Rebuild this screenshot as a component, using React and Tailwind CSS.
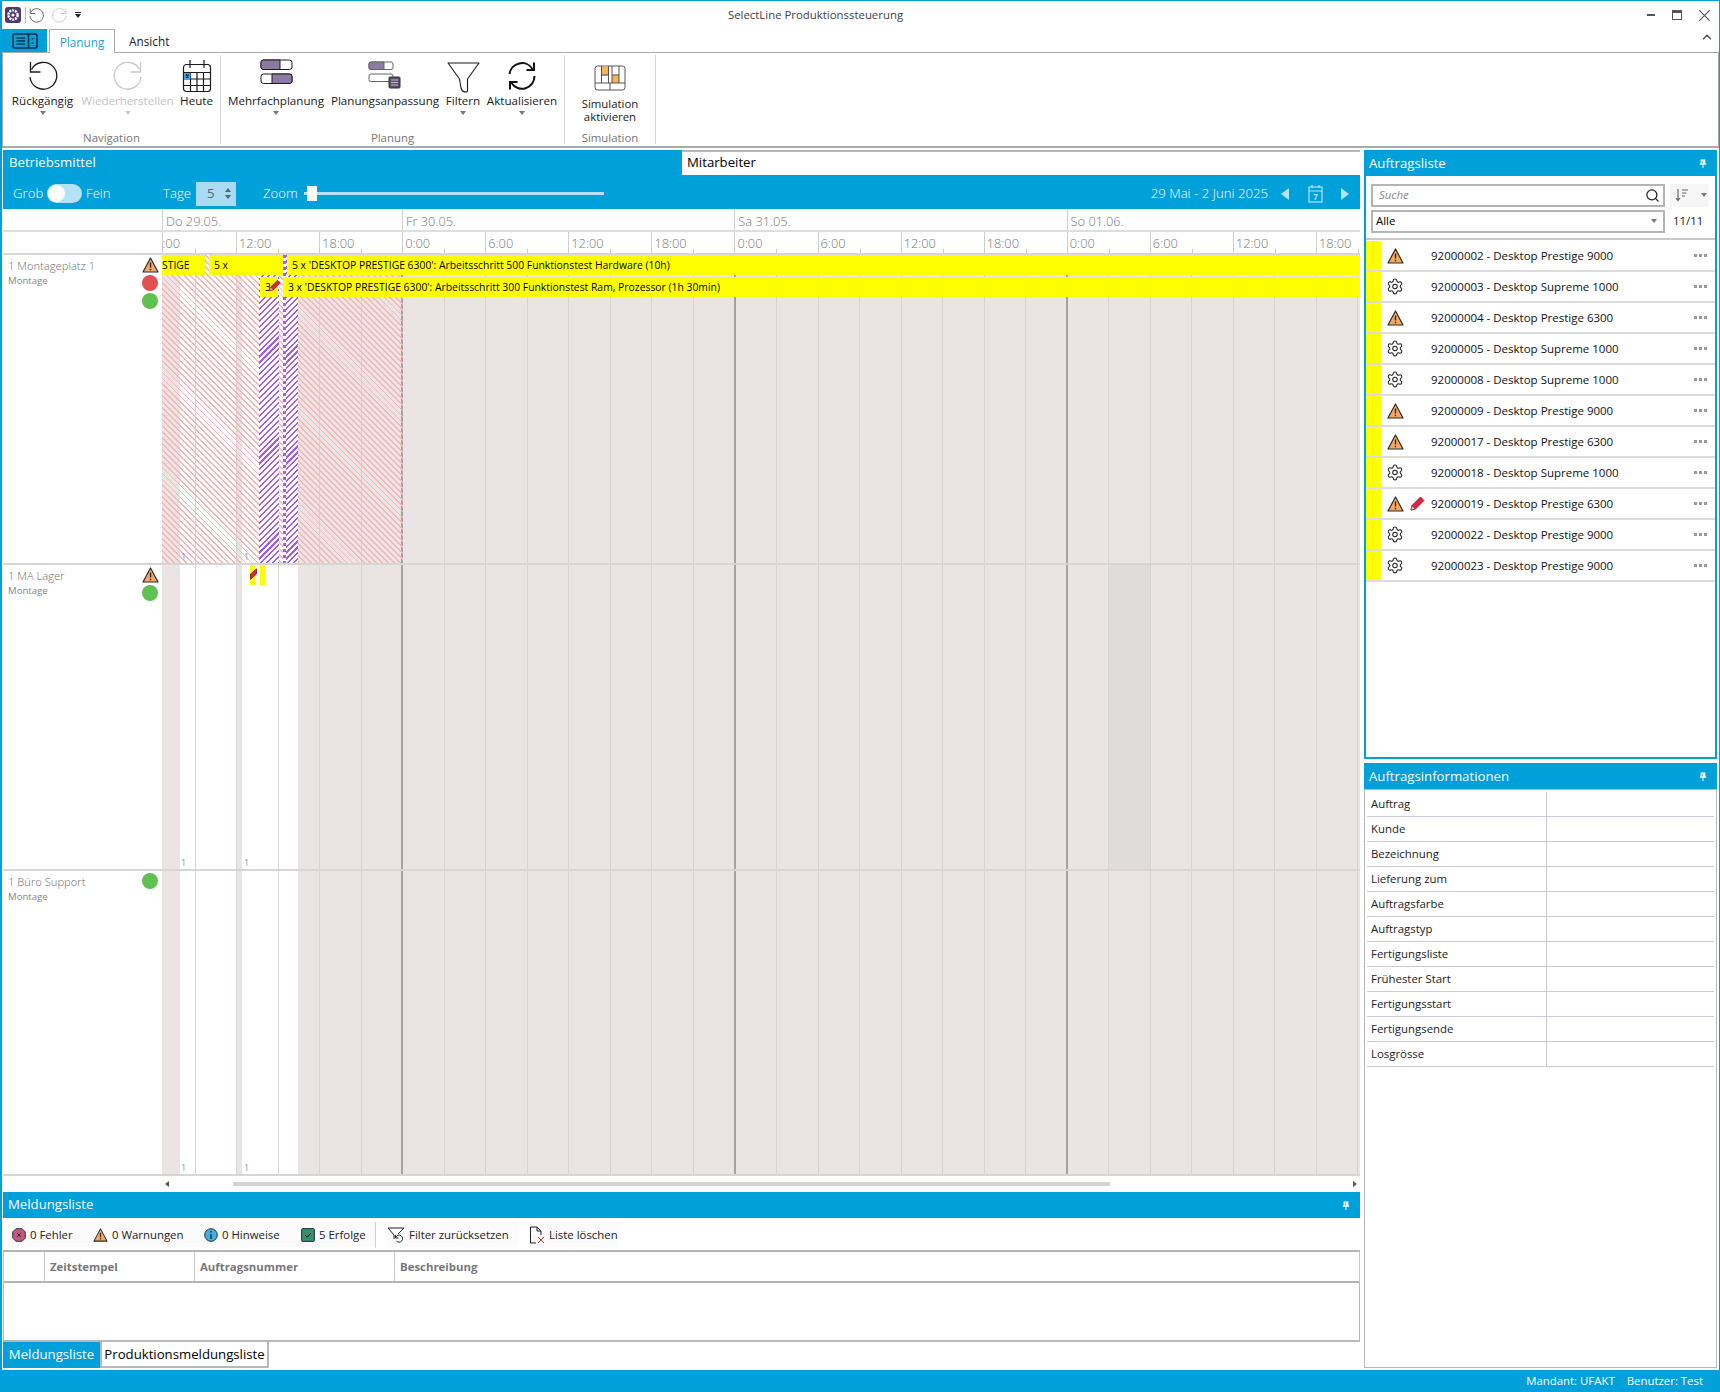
import { Settings, Search, ChevronUp } from "lucide-react";

const hourLabels = ["12:00", "18:00", "0:00", "6:00", "12:00", "18:00", "0:00", "6:00", "12:00", "18:00", "0:00", "6:00", "12:00", "18:00"];

const orders = [
  ["92000002 - Desktop Prestige 9000", "warn"],
  ["92000003 - Desktop Supreme 1000", "gear"],
  ["92000004 - Desktop Prestige 6300", "warn"],
  ["92000005 - Desktop Supreme 1000", "gear"],
  ["92000008 - Desktop Supreme 1000", "gear"],
  ["92000009 - Desktop Prestige 9000", "warn"],
  ["92000017 - Desktop Prestige 6300", "warn"],
  ["92000018 - Desktop Supreme 1000", "gear"],
  ["92000019 - Desktop Prestige 6300", "warn", true],
  ["92000022 - Desktop Prestige 9000", "gear"],
  ["92000023 - Desktop Prestige 9000", "gear"],
];

const infoFields = ["Auftrag", "Kunde", "Bezeichnung", "Lieferung zum", "Auftragsfarbe", "Auftragstyp", "Fertigungsliste", "Frühester Start", "Fertigungsstart", "Fertigungsende", "Losgrösse"];

const Caret = ({ className = "border-t-[#777]" }) => (
  <span className={`block w-0 h-0 border-x-[3px] border-x-transparent border-t-[4px] ${className}`} />
);

const Warn = ({ className = "w-[17px] h-[16px]" }) => (
  <svg viewBox="0 0 17 16" className={className}>
    <path d="M8.5 1 L16 15 H1 Z" fill="#f7a860" stroke="#2b2b2b" strokeWidth="1.2" strokeLinejoin="round" />
    <path d="M8.5 5.5 V10.5 M8.5 11.8 V13.2" stroke="#2b2b2b" strokeWidth="1.4" />
  </svg>
);

const Pencil = ({ className = "w-[15px] h-[15px]" }) => (
  <svg viewBox="0 0 15 15" className={className}>
    <path d="M10.5 1 L14 4.5 L5.5 13 L1 14 L2 9.5 Z" fill="#d9283c" stroke="#8c1020" strokeWidth="0.8" strokeLinejoin="round" />
    <path d="M2 9.5 L5.5 13 L1 14 Z" fill="#f3c9b8" stroke="#8c1020" strokeWidth="0.6" />
  </svg>
);

const Pin = () => (
  <svg viewBox="0 0 10 12" className="w-[8px] h-[11px]">
    <path d="M2 1 H8 V6 H9 V7.5 H5.6 V11.5 H4.4 V7.5 H1 V6 H2 Z M3.5 2.2 V6 H4.5 V2.2 Z" fill="#fff" fillRule="evenodd" />
  </svg>
);

const UndoIcon = ({ color = "#1c1c1c", flip = false, className = "w-[30px] h-[30px]", weight = "1.3" }) => (
  <svg viewBox="0 0 30 30" className={`shrink-0 ${className} ${flip ? "-scale-x-100" : ""}`} fill="none" stroke={color} strokeWidth={weight}>
    <path d="M3.5 8.5 A13.4 13.4 0 1 1 2 16" />
    <path d="M2.5 1 V11 H12.5" />
  </svg>
);

const CalendarIcon = () => (
  <svg viewBox="0 0 30 34" className="w-[30px] h-[34px]" fill="none" stroke="#1c1c1c" strokeWidth="1.2">
    <rect x="1.5" y="5.5" width="27" height="27" rx="3" fill="#fff" />
    <path d="M1.5 13.5 H28.5 M1.5 20 H28.5 M1.5 26.5 H28.5 M8.5 13.5 V32.5 M15 13.5 V32.5 M21.5 13.5 V32.5 M8 1 V9 M22 1 V9" />
    <rect x="2" y="14" width="6.5" height="6" fill="#3fa5da" stroke="none" />
    <path d="M4 15.5 L6.5 18.5 M6.5 15.5 L4 18.5" stroke="#123" />
  </svg>
);

const MultiPlanIcon = () => (
  <svg viewBox="0 0 33 26" className="w-[33px] h-[26px]" stroke="#1c1c1c" strokeWidth="1">
    <rect x="1" y="1" width="31" height="9.5" rx="2.5" fill="#fff" />
    <path d="M3.5 1 H20 V10.5 H3.5 A2.5 2.5 0 0 1 1 8 V3.5 A2.5 2.5 0 0 1 3.5 1 Z" fill="#8d7aa3" />
    <rect x="1" y="15" width="31" height="9.5" rx="2.5" fill="#fff" />
    <path d="M12 15 H29.5 A2.5 2.5 0 0 1 32 17.5 V22 A2.5 2.5 0 0 1 29.5 24.5 H12 Z" fill="#8d7aa3" />
  </svg>
);

const AdjustIcon = () => (
  <svg viewBox="0 0 34 28" className="w-[34px] h-[28px]" stroke="#666" strokeWidth="1">
    <rect x="1" y="1" width="24" height="7.5" rx="2" fill="#fff" />
    <path d="M3 1 H16 V8.5 H3 A2 2 0 0 1 1 6.5 V3 A2 2 0 0 1 3 1 Z" fill="#8d7aa3" />
    <rect x="1" y="13" width="24" height="7.5" rx="2" fill="#fff" />
    <rect x="21" y="16" width="11" height="11" rx="1" fill="#5d4c6e" stroke="#333" />
    <path d="M23 19 H30 M23 21.5 H30 M23 24 H30" stroke="#ddd" strokeWidth="0.8" />
  </svg>
);

const FilterIcon = ({ className = "w-[33px] h-[31px]" }) => (
  <svg viewBox="0 0 33 31" className={className} fill="#fff" stroke="#1c1c1c" strokeWidth="1.1" strokeLinejoin="round">
    <path d="M1 1 H32 L20.5 17 V29 Q20.5 30 19 30 Q15 30 14 26 L12.5 17 Z" />
  </svg>
);

const RefreshIcon = () => (
  <svg viewBox="0 0 30 30" className="w-[30px] h-[30px]" fill="none" stroke="#111" strokeWidth="2">
    <path d="M2.5 13 A12.5 12.5 0 0 1 25.5 8" />
    <path d="M27.5 15 A12.5 12.5 0 0 1 4.5 22" />
    <path d="M27 1.5 V9 H19.5 M3 28.5 V21 H10.5" />
  </svg>
);

const SimIcon = () => (
  <svg viewBox="0 0 32 26" className="w-[32px] h-[26px]" stroke="#444" strokeWidth="0.9" fill="#fff">
    <rect x="1" y="1" width="30" height="24" rx="2.5" />
    <rect x="7.5" y="1.5" width="7" height="9" fill="#f6b25f" stroke="none" />
    <rect x="18" y="10" width="7" height="8" fill="#f6b25f" stroke="none" />
    <path d="M7.5 1 V18 M14.5 1 V18 M18 1 V18 M25 1 V18 M1 18 H31 M16 18 V25 M7.5 10 H14.5 M18 10 H25" fill="none" />
  </svg>
);

const AppLogo = () => (
  <svg viewBox="0 0 16 16" className="w-[16px] h-[16px]">
    <rect width="16" height="16" rx="3" fill="#4e3a6d" />
    <circle cx="8" cy="8" r="4.6" fill="none" stroke="#fff" strokeWidth="2.4" strokeDasharray="2 0.9" />
    <circle cx="8" cy="8" r="1.6" fill="#fff" />
  </svg>
);

const RibbonButton = ({ label, icon, width, caret, disabled, lift = "pb-0" }) => (
  <div className={`flex flex-col items-center shrink-0 ${width}`}>
    <div className={`h-[37px] mt-[1px] flex items-end justify-center ${lift}`}>{icon}</div>
    <span className={`text-[11.6px] leading-[16px] whitespace-nowrap ${disabled ? "text-[#c4c4c4]" : "text-[#1a1a1a]"}`}>{label}</span>
    {caret && <span className="mt-[2px]"><Caret className={disabled ? "border-t-[#ccc]" : "border-t-[#777]"} /></span>}
  </div>
);

const RibbonGroup = ({ label, width, children }) => (
  <div className={`flex flex-col shrink-0 border-r border-[#d4d4d4] my-[2px] ${width}`}>
    <div className="flex flex-1">{children}</div>
    <div className="h-[11px] text-center text-[11.4px] leading-[10px] text-[#777]">{label}</div>
  </div>
);

const Ribbon = () => (
  <div className="h-[95px] flex border-b-2 border-x border-[#ababab] bg-white shrink-0">
    <RibbonGroup label="Navigation" width="w-[218px]">
      <div className="w-[4px]" />
      <RibbonButton label="Rückgängig" icon={<UndoIcon />} lift="pb-[2px]" width="w-[71px]" caret />
      <RibbonButton label="Wiederherstellen" icon={<UndoIcon color="#c8c8c8" flip />} lift="pb-[2px]" width="w-[99px]" caret disabled />
      <RibbonButton label="Heute" icon={<CalendarIcon />} width="w-[39px]" />
    </RibbonGroup>
    <RibbonGroup label="Planung" width="w-[344px]">
      <div className="w-[4px]" />
      <RibbonButton label="Mehrfachplanung" icon={<MultiPlanIcon />} lift="pb-[8px]" width="w-[102px]" caret />
      <RibbonButton label="Planungsanpassung" icon={<AdjustIcon />} lift="pb-[4px]" width="w-[116px]" />
      <RibbonButton label="Filtern" icon={<FilterIcon />} width="w-[40px]" caret />
      <RibbonButton label="Aktualisieren" icon={<RefreshIcon />} lift="pb-[2px]" width="w-[78px]" caret />
    </RibbonGroup>
    <RibbonGroup label="Simulation" width="w-[91px]">
      <div className="flex flex-col items-center w-full">
        <div className="h-[36px] flex items-end"><SimIcon /></div>
        <span className="mt-[6px] text-[11.4px] leading-[13px] text-center text-[#1a1a1a]">Simulation<br />aktivieren</span>
      </div>
    </RibbonGroup>
  </div>
);

// Arbeitszeit-Bänder und Rasterlinien einer Zeile
const RowGrid = ({ sunday }) => (
  <>
    <div className="absolute inset-0 flex">
      <div className="w-[18px] bg-[#eae4e4]" />
      <div className="w-[56px] bg-white" />
      <div className="w-[6px] bg-[#eae4e4]" />
      <div className="w-[56px] bg-white" />
      <div className="flex-1 bg-[#eae4e4]" />
    </div>
    {sunday && <div className="absolute inset-y-0 left-[946px] w-[42px] bg-[#e0dcdc]" />}
    <GridLines />
  </>
);

const GridLines = () => {
  const cells = [];
  for (let i = 0; i < 29; i++) cells.push(i);
  return (
    <div className="absolute inset-0 flex overflow-hidden z-10">
      {cells.map((i) => (
        <div
          key={i}
          style={{ width: i === 0 ? 33.6 : 41.54 }}
          className={`shrink-0 box-border ${(i + 1) % 8 === 6 ? "border-r-2 border-[#a3a3a3]" : "border-r border-[#d6d4d4]"}`}
        />
      ))}
    </div>
  );
};

const RowOne = () => (
  <div className="h-[310px] flex border-b-2 border-[#d6d6d6] shrink-0">
    <ResourceLabel name="1 Montageplatz 1" warn red />
    <div className="relative flex-1 overflow-hidden">
      <RowGrid />
      <div className="absolute inset-y-0 left-0 w-[241px] z-20 bg-[repeating-linear-gradient(45deg,#f7b7b7_0px,#f7b7b7_1.3px,transparent_1.3px,transparent_4.2px)]" />
      <div className="absolute inset-y-0 left-[97px] w-[20px] z-20 bg-white" />
      <div className="absolute inset-y-0 left-[97px] w-[20px] z-20 bg-[repeating-linear-gradient(135deg,#a45df0_0px,#a45df0_1.5px,transparent_1.5px,transparent_4.2px)]" />
      <div className="absolute inset-y-0 left-[121px] w-[3px] z-20 bg-[repeating-linear-gradient(180deg,#a45df0_0px,#a45df0_3px,#fff_3px,#fff_6px)]" />
      <div className="absolute inset-y-0 left-[124px] w-[12px] z-20 bg-white" />
      <div className="absolute inset-y-0 left-[124px] w-[12px] z-20 bg-[repeating-linear-gradient(135deg,#a45df0_0px,#a45df0_1.5px,transparent_1.5px,transparent_4.2px)]" />
      <Bar className="left-0 w-[43px] top-0">STIGE</Bar>
      <Bar className="left-[47px] w-[74px] top-0 pl-[5px]">5 x</Bar>
      <Bar className="left-[125px] right-0 top-0 pl-[5px]">5 x 'DESKTOP PRESTIGE 6300': Arbeitsschritt 500 Funktionstest Hardware (10h)</Bar>
      <Bar className="left-[98px] w-[18px] top-[22px] pl-[5px]">3</Bar>
      <span className="absolute left-[107px] top-[24px] z-40"><Pencil className="w-[12px] h-[13px]" /></span>
      <Bar className="left-[121px] right-0 top-[22px] pl-[5px]">3 x 'DESKTOP PRESTIGE 6300': Arbeitsschritt 300 Funktionstest Ram, Prozessor (1h 30min)</Bar>
      <RowMarks />
    </div>
  </div>
);

const RowMarks = () => (
  <>
    <span className="absolute left-[19px] bottom-[1px] z-30 text-[9px] leading-[10px] text-[#7d9ab0]">1</span>
    <span className="absolute left-[82px] bottom-[1px] z-30 text-[9px] leading-[10px] text-[#7d9ab0]">1</span>
  </>
);

const Bar = ({ className, children }) => (
  <div className={`absolute h-[20px] z-30 bg-[#ffff00] text-[10.36px] leading-[20px] text-black whitespace-nowrap overflow-hidden ${className}`}>{children}</div>
);

const ResourceLabel = ({ name, warn, red }) => (
  <div className="w-[159px] flex justify-between shrink-0 pl-[5px] pr-[4px] pt-[2px] bg-white">
    <div>
      <div className="text-[11.2px] leading-[17px] font-light text-[#6e6e6e] whitespace-nowrap">{name}</div>
      <div className="text-[9.6px] leading-[14px] text-[#858585]">Montage</div>
    </div>
    <div className="flex flex-col items-center w-[16px] gap-[2px]">
      {warn && <Warn />}
      {red && <span className="w-[16px] h-[16px] rounded-full bg-[#e05050]" />}
      <span className="w-[16px] h-[16px] rounded-full bg-[#60c050]" />
    </div>
  </div>
);

const Timeline = () => (
  <div className="flex flex-col">
    <div className="flex pl-[159px] h-[23px] border-b-2 border-[#dedede] overflow-hidden">
      {[["Do 29.05.", "w-[240px]"], ["Fr 30.05.", "w-[332.3px]"], ["Sa 31.05.", "w-[332.3px]"], ["So 01.06.", "w-[293px]"]].map(([d, w]) => (
        <div key={d} className={`${w} shrink-0 border-l border-[#d0d0d0] pl-[3px] text-[12.8px] leading-[24px] font-light text-[#777]`}>{d}</div>
      ))}
    </div>
    <div className="flex pl-[159px] h-[23px] border-b-2 border-[#d6d6d6] overflow-hidden">
      <div className="relative w-[74px] shrink-0 border-l border-[#d0d0d0] overflow-hidden text-[12.8px] leading-[22px] font-light text-[#777]">
        <span className="absolute left-[-8px]">6:00</span>
        <span className="absolute left-[32px] bottom-0 h-[4px] border-l border-[#cfcfcf]" />
      </div>
      {hourLabels.map((h, i) => (
        <div key={i} className="relative w-[83.08px] shrink-0 border-l border-[#d0d0d0] pl-[2px] text-[12.8px] leading-[22px] font-light text-[#777]">
          {h}
          <span className="absolute left-[41px] bottom-0 h-[4px] border-l border-[#cfcfcf]" />
        </div>
      ))}
    </div>
  </div>
);

const GanttArea = () => (
  <div className="flex flex-col">
    <Timeline />
    <RowOne />
    <div className="h-[306px] flex border-b-2 border-[#d6d6d6]">
      <ResourceLabel name="1 MA Lager" warn />
      <div className="relative flex-1 overflow-hidden">
        <RowGrid sunday />
        <div className="absolute left-[88px] w-[5px] top-0 h-[20px] z-30 bg-[#ffff00]" />
        <div className="absolute left-[98px] w-[5px] top-0 h-[20px] z-30 bg-[#ffff00]" />
        <svg viewBox="0 0 7 12" className="absolute left-[88px] top-[3px] z-40 w-[7px] h-[12px]">
          <path d="M.5 6 L6.5 .8 V6 L.5 11.2 Z" fill="#d9283c" stroke="#6d0c18" strokeWidth="0.7" />
        </svg>
        <RowMarks />
      </div>
    </div>
    <div className="h-[305px] flex border-b-2 border-[#d6d6d6]">
      <ResourceLabel name="1 Büro Support" />
      <div className="relative flex-1 overflow-hidden">
        <RowGrid />
        <RowMarks />
      </div>
    </div>
    <div className="h-[16px] flex items-center bg-white relative">
      <div className="w-[159px]" />
      <span className="w-0 h-0 ml-[3px] border-y-[3.5px] border-y-transparent border-r-[4px] border-r-[#555]" />
      <div className="ml-[64px] w-[877px] h-[4px] bg-[#d3d3d3]" />
      <span className="ml-auto mr-[3px] w-0 h-0 border-y-[3.5px] border-y-transparent border-l-[4px] border-l-[#555]" />
    </div>
  </div>
);

const LeftPane = () => (
  <div className="w-[1357px] flex flex-col shrink-0">
    <div className="flex h-[25px] mt-[2px] shrink-0">
      <div className="w-[679px] bg-[#00a0da] text-white text-[13.2px] leading-[25px] pl-[6px] font-medium">Betriebsmittel</div>
      <div className="flex-1 border-t-2 border-[#b8b8b8] bg-white text-black text-[13.2px] leading-[21px] pl-[5px]">Mitarbeiter</div>
    </div>
    <div className="h-[34px] pt-[3px] bg-[#00a0da] flex items-center shrink-0 text-white text-[13.2px] font-light">
      <span className="ml-[10px] w-[34px]">Grob</span>
      <span className="w-[35px] h-[19px] rounded-full bg-[#b5e3f6] flex items-center">
        <span className="w-[17px] h-[17px] rounded-full bg-white ml-[1px]" />
      </span>
      <span className="ml-[4px] w-[77px]">Fein</span>
      <span className="w-[33px]">Tage</span>
      <span className="w-[40px] h-[24px] bg-[#a9dcf3] flex items-center justify-between pl-[11px] pr-[5px] text-[#55666f] font-normal">
        5
        <span className="flex flex-col gap-[3px]">
          <span className="w-0 h-0 border-x-[3px] border-x-transparent border-b-[4px] border-b-[#55666f]" />
          <Caret className="border-t-[#55666f]" />
        </span>
      </span>
      <span className="ml-[27px] w-[36px]">Zoom</span>
      <span className="relative ml-[5px] w-[300px] h-[3px] bg-[#b5e3f6]">
        <span className="absolute left-[3px] top-[-6px] w-[10px] h-[15px] bg-white" />
      </span>
      <span className="ml-auto mr-[13px] whitespace-nowrap">29 Mai - 2 Juni 2025</span>
      <span className="w-0 h-0 border-y-[6px] border-y-transparent border-r-[8px] border-r-[#b5e3f6]" />
      <svg viewBox="0 0 15 19" className="w-[15px] h-[19px] ml-[19px]" fill="none" stroke="#b5e3f6" strokeWidth="1.2">
        <rect x="1" y="3" width="13" height="15" />
        <path d="M1 7 H14 M4 1 V4 M11 1 V4" />
        <text x="7.5" y="16" textAnchor="middle" fontSize="8" fill="#b5e3f6" stroke="none" fontWeight="700">7</text>
      </svg>
      <span className="ml-[18px] mr-[11px] w-0 h-0 border-y-[6px] border-y-transparent border-l-[8px] border-l-[#b5e3f6]" />
    </div>
    <GanttArea />
    <div className="h-[26px] bg-[#00a0da] flex items-center justify-between pl-[5px] pr-[10px] text-white text-[13.2px] font-medium shrink-0">
      Meldungsliste
      <Pin />
    </div>
    <div className="h-[34px] pt-[1px] flex items-center text-[11.4px] text-[#222] border-b-2 border-[#b4b4b4] shrink-0 whitespace-nowrap">
      <ToolItem className="ml-[9px] w-[81px]" icon={<svg viewBox="0 0 14 14" className="w-[14px] h-[14px]"><path d="M4 .7 H10 L13.3 4 V10 L10 13.3 H4 L.7 10 V4 Z" fill="#c05a80" stroke="#333" /><path d="M5.3 5.3 L8.7 8.7 M8.7 5.3 L5.3 8.7" stroke="#222" /></svg>}>0 Fehler</ToolItem>
      <ToolItem className="w-[111px]" icon={<Warn className="w-[15px] h-[14px]" />}>0 Warnungen</ToolItem>
      <ToolItem className="w-[97px]" icon={<svg viewBox="0 0 14 14" className="w-[14px] h-[14px]"><circle cx="7" cy="7" r="6.3" fill="#45aee0" stroke="#234" /><path d="M7 6 V11 M7 3 V4.4" stroke="#123" strokeWidth="1.3" /></svg>}>0 Hinweise</ToolItem>
      <ToolItem className="w-[74px]" icon={<svg viewBox="0 0 14 14" className="w-[14px] h-[14px]"><rect x=".6" y=".6" width="12.8" height="12.8" rx="1" fill="#349068" stroke="#234" /><path d="M4 7 L6.2 9.2 L10 5" fill="none" stroke="#111" /></svg>}>5 Erfolge</ToolItem>
      <span className="w-px h-[26px] bg-[#d0d0d0]" />
      <ToolItem className="ml-[11px] w-[131px]" icon={<svg viewBox="0 0 18 16" className="w-[18px] h-[16px]" fill="none" stroke="#222"><path d="M1 1 H17 L11 7 M1 1 L7 8 V12" /><path d="M9 10 A3.5 3.5 0 1 1 9.5 14 M8.5 8 V11 H11.5" /></svg>}>Filter zurücksetzen</ToolItem>
      <ToolItem className="ml-[11px] w-[90px]" icon={<svg viewBox="0 0 16 18" className="w-[16px] h-[18px]" fill="none" stroke="#222"><path d="M7 17 H1.5 V1 H8 L12 5 V9 M8 1 V5 H12" /><path d="M9 11 L15 17 M15 11 L9 17" stroke="#c0304a" /></svg>}>Liste löschen</ToolItem>
    </div>
    <div className="h-[31px] flex text-[11.4px] font-bold text-[#777] border-b-2 border-[#b4b4b4] border-x border-x-[#c8c8c8] shrink-0">
      <div className="w-[41px] border-r border-[#c8c8c8]" />
      <div className="w-[150px] border-r border-[#c8c8c8] pl-[5px] leading-[30px]">Zeitstempel</div>
      <div className="w-[200px] border-r border-[#c8c8c8] pl-[5px] leading-[30px]">Auftragsnummer</div>
      <div className="flex-1 pl-[5px] leading-[30px]">Beschreibung</div>
    </div>
    <div className="h-[59px] border-x border-b-2 border-[#b8b8b8] shrink-0" />
    <div className="flex h-[26px] text-[13.2px] shrink-0">
      <div className="w-[97px] bg-[#00a0da] text-white text-center leading-[25px] font-medium">Meldungsliste</div>
      <div className="w-[169px] border-2 border-t-0 border-[#b8b8b8] text-black text-center leading-[24px]">Produktionsmeldungsliste</div>
    </div>
  </div>
);

const ToolItem = ({ icon, className, children }) => (
  <div className={`flex items-center gap-[4px] h-[25px] bg-[#fbfbfb] shrink-0 ${className}`}>
    {icon}
    <span>{children}</span>
  </div>
);

const OrderList = () => (
  <div className="h-[583px] border-x-2 border-b-2 border-[#00a0da] flex flex-col shrink-0">
    <div className="flex items-center h-[22px] mt-[8px] ml-[5px] gap-[5px]">
      <div className="w-[294px] h-[23px] border-2 border-[#b4b4b4] flex items-center justify-between pl-[6px] pr-[3px] text-[11.4px] italic text-[#8a8a8a]">
        Suche
        <Search size={15} strokeWidth={2} className="text-[#222]" />
      </div>
      <div className="w-[39px] h-[23px] bg-[#f6f6f6] flex items-center pl-[5px] gap-[12px]">
        <svg viewBox="0 0 14 14" className="w-[14px] h-[14px]" fill="none" stroke="#666" strokeWidth="1.2"><path d="M3 1 V12 M1 10 L3 12.5 L5 10 M7 2 H13 M7 5 H11.5 M7 8 H10" /></svg>
        <Caret />
      </div>
    </div>
    <div className="flex items-center h-[22px] mt-[4px] ml-[5px]">
      <div className="w-[294px] h-[23px] border-2 border-[#b4b4b4] flex items-center justify-between pl-[3px] pr-[6px] text-[11.4px] text-black">
        Alle
        <Caret />
      </div>
      <span className="ml-[8px] text-[11.4px] text-[#222]">11/11</span>
    </div>
    <div className="mt-[6px] border-t-2 border-[#c8c8c8] pt-[1px]">
      {orders.map(([name, kind, edited]) => (
        <div key={name} className="h-[31px] flex items-center border-b-2 border-[#dcdcdc]">
          <div className="w-[15px] h-full bg-[#ffff00]" />
          <div className="w-[18px] ml-[5px] flex justify-center">
            {kind === "warn" ? <Warn /> : <Settings size={19} strokeWidth={1.4} className="text-[#222]" />}
          </div>
          <div className="w-[27px] flex justify-center">{edited && <Pencil />}</div>
          <span className="text-[11.5px] text-[#111] whitespace-nowrap">{name}</span>
          <span className="ml-auto mr-[8px] flex gap-[2px]">
            <span className="w-[3px] h-[3px] bg-[#9a9a9a]" />
            <span className="w-[3px] h-[3px] bg-[#9a9a9a]" />
            <span className="w-[3px] h-[3px] bg-[#9a9a9a]" />
          </span>
        </div>
      ))}
    </div>
  </div>
);

const RightPane = () => (
  <div className="w-[353px] ml-[4px] flex flex-col shrink-0">
    <div className="h-[26px] pt-[1px] mt-[2px] bg-[#00a0da] flex items-center justify-between pl-[5px] pr-[10px] text-white text-[13.2px] font-medium shrink-0">
      Auftragsliste
      <Pin />
    </div>
    <OrderList />
    <div className="h-[26px] pt-[1px] mt-[4px] bg-[#00a0da] flex items-center justify-between pl-[5px] pr-[10px] text-white text-[13.2px] font-medium shrink-0">
      Auftragsinformationen
      <Pin />
    </div>
    <div className="flex-1 border-x border-b border-t border-[#b8b8b8] pl-[2px] pr-[2px] pt-[2px] mb-[2px]">
      {infoFields.map((f) => (
        <div key={f} className="h-[25px] flex border-b border-[#cbcbd6]">
          <div className="w-[180px] border-r border-[#cbcbd6] pl-[4px] text-[11.4px] leading-[24px] text-[#1c1c1c]">{f}</div>
        </div>
      ))}
    </div>
  </div>
);

export default function App() {
  return (
    <div className="w-[1720px] h-[1392px] flex flex-col overflow-hidden bg-white border-t border-l-2 border-r border-[#00a0da] font-['Open_Sans',sans-serif]">
      <div className="h-[28px] flex items-center shrink-0 relative">
        <span className="ml-[3px]"><AppLogo /></span>
        <span className="ml-[4px] w-px h-[16px] bg-[#bbb]" />
        <span className="ml-[3px]"><UndoIcon color="#666" className="w-[15px] h-[15px]" weight="2" /></span>
        <span className="ml-[8px]"><UndoIcon color="#ccc" flip className="w-[15px] h-[15px]" weight="2" /></span>
        <span className="ml-[8px] flex flex-col gap-[1px]"><span className="w-[6px] h-px bg-[#222]" /><Caret className="border-t-[#222]" /></span>
        <span className="absolute left-[0] right-[90px] text-center text-[11.4px] text-[#444]">SelectLine Produktionssteuerung</span>
        <div className="ml-auto flex items-center text-[#444]">
          <span className="w-[8px] h-[2px] bg-[#555]" />
          <span className="ml-[17px] w-[10px] h-[10px] border border-t-[3px] border-[#555]" />
          <svg viewBox="0 0 10 10" className="ml-[17px] mr-[9px] w-[11px] h-[11px]" stroke="#555" strokeWidth="1"><path d="M0 0 L10 10 M10 0 L0 10" /></svg>
        </div>
      </div>
      <div className="h-[24px] flex relative shrink-0 -mb-px z-10">
        <div className="w-[45px] h-[23px] bg-[#00a0da] flex items-center justify-center">
          <svg viewBox="0 0 26 16" className="w-[26px] h-[16px]" fill="none" stroke="#0f2d44" strokeWidth="1.6">
            <rect x="1" y="1" width="24" height="14" rx="2" />
            <path d="M16.5 1 V15 M4.5 5 H13 M4.5 8 H13 M4.5 11 H13 M20.5 5 V6.5 M20.5 9.5 V11" />
          </svg>
        </div>
        <div className="ml-[2px] w-[66px] h-[24px] border-x border-t border-[#ababab] bg-white text-center text-[#1ea0dc] text-[11.8px] leading-[25px]">Planung</div>
        <div className="ml-[14px] text-[11.8px] leading-[25px] text-[#1a1a1a]">Ansicht</div>
        <ChevronUp size={14} strokeWidth={2.5} className="ml-auto mr-[5px] mt-[1px] text-[#555]" />
      </div>
      <div className="border-t border-[#ababab]"><Ribbon /></div>
      <div className="flex flex-1 min-h-0 pl-px">
        <LeftPane />
        <RightPane />
      </div>
      <div className="h-[22px] bg-[#00a0da] flex items-center justify-end pr-[16px] gap-[12px] text-white text-[11.4px] shrink-0">
        <span>Mandant: UFAKT</span>
        <span>Benutzer: Test</span>
      </div>
    </div>
  );
}
